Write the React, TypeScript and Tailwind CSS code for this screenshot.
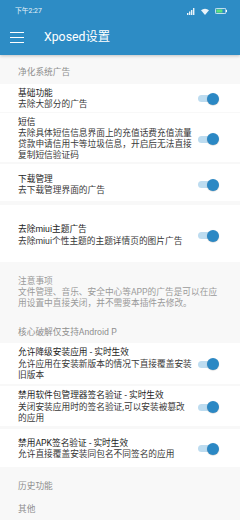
import React from "react";

const FONT = { fontFamily: '"Roboto","Noto Sans CJK SC",sans-serif' };

function Toggle() {
  return (
    <div className="relative w-[21px] h-[12px] shrink-0">
      <div className="absolute left-0 top-[2.5px] w-[17px] h-[7px] rounded-full bg-[#bddcf0]" />
      <div className="absolute right-0 top-0 w-[12px] h-[12px] rounded-full bg-[#2b88c4] shadow-[0_0.5px_1px_rgba(0,0,0,0.25)]" />
    </div>
  );
}

type RowProps = {
  title: string;
  lines: string[];
  cls: string;
};

function Row({ title, lines, cls }: RowProps) {
  return (
    <div className={`flex items-center justify-between bg-white pl-[18px] pr-[21px] ${cls}`}>
      <div className="w-[177px] text-[8.7px] leading-[11.2px] whitespace-nowrap">
        <div className="text-[#1c1c1c]">{title}</div>
        {lines.map((l, i) => (
          <div key={i} className="text-[#383838]">
            {l}
          </div>
        ))}
      </div>
      <Toggle />
    </div>
  );
}

function Category({ text, cls }: { text: string; cls: string }) {
  return (
    <div className={`pl-[18px] text-[8.7px] leading-[11.2px] text-[#8e8e8e] ${cls}`}>{text}</div>
  );
}

export default function App() {
  return (
    <div className="w-[240px] h-[520px] overflow-hidden bg-[#f8f8f8] flex flex-col" style={FONT}>
      <div className="relative z-10 bg-[#2d8cc5] shadow-[0_1px_3px_rgba(0,0,0,0.22)]">
        <div className="h-[20px] flex items-center justify-between pl-[15px] pr-[13px] pt-[2px]">
          <span className="text-[6.8px] leading-none text-white/90">下午2:27</span>
          <div className="flex items-center gap-[6px]">
            <svg width="8" height="7" viewBox="0 0 8 7">
              <rect x="0" y="5" width="1.4" height="2" fill="#fff" fillOpacity="0.9" />
              <rect x="2" y="3.5" width="1.4" height="3.5" fill="#fff" fillOpacity="0.9" />
              <rect x="4" y="2" width="1.4" height="5" fill="#fff" fillOpacity="0.9" />
              <rect x="6" y="0" width="1.4" height="7" fill="#fff" fillOpacity="0.9" />
            </svg>
            <svg width="8" height="7" viewBox="0 0 8 7">
              <path d="M4 7 L0 2.2 A6 6 0 0 1 8 2.2 Z" fill="#fff" fillOpacity="0.9" />
            </svg>
            <svg width="12" height="6" viewBox="0 0 12 6">
              <rect x="0.4" y="0.4" width="10.4" height="5.2" rx="1" fill="none" stroke="#fff" strokeWidth="0.8" />
              <rect x="1.4" y="1.4" width="6" height="3.2" fill="#5ee07a" />
              <rect x="11" y="2" width="1" height="2" fill="#fff" />
            </svg>
          </div>
        </div>
        <div className="h-[35px] flex items-center">
          <div className="ml-[10px] w-[14px] flex flex-col gap-[3.5px]">
            <div className="h-[1.5px] bg-white" />
            <div className="h-[1.5px] bg-white" />
            <div className="h-[1.5px] bg-white" />
          </div>
          <span className="ml-[20px] text-[12.3px] leading-none text-white">Xposed设置</span>
        </div>
      </div>

      <Category text="净化系统广告" cls="pt-[12px] pb-[6px]" />
      <Row title="基础功能" lines={["去除大部分的广告"]} cls="pt-[3.5px] pb-[1.5px]" />
      <div className="h-[1.5px]" />
      <Row
        title="短信"
        lines={[
          "去除具体短信信息界面上的充值话费充值流量",
          "贷款申请信用卡等垃圾信息，开启后无法直接",
          "复制短信验证码",
        ]}
        cls="pt-[3.5px] pb-[0.5px]"
      />
      <div className="h-[2.5px]" />
      <Row title="下载管理" lines={["去下载管理界面的广告"]} cls="pt-[9.3px] pb-[5px]" />
      <div className="h-[3.5px]" />
      <Row title="去除miui主题广告" lines={["去除miui个性主题的主题详情页的图片广告"]} cls="pt-[19.8px] pb-[15px]" />

      <div className="pl-[18px] pt-[14px] text-[8.7px] leading-[11.3px] text-[#9a9a9a] whitespace-nowrap">
        <div>注意事项</div>
        <div>文件管理、音乐、安全中心等APP的广告是可以在应</div>
        <div>用设置中直接关闭，并不需要本插件去修改。</div>
      </div>
      <Category text="核心破解仅支持Android P" cls="pt-[17px] pb-[5px]" />
      <Row
        title="允许降级安装应用 - 实时生效"
        lines={["允许应用在安装新版本的情况下直接覆盖安装", "旧版本"]}
        cls="pt-[4.4px] pb-[3px]"
      />
      <div className="h-[2px]" />
      <Row
        title="禁用软件包管理器签名验证 - 实时生效"
        lines={["关闭安装应用时的签名验证,可以安装被篡改", "的应用"]}
        cls="pt-[4.4px] pb-[2px]"
      />
      <div className="h-[3px]" />
      <Row
        title="禁用APK签名验证 - 实时生效"
        lines={["允许直接覆盖安装同包名不同签名的应用"]}
        cls="pt-[8.7px] pb-[7px]"
      />
      <Category text="历史功能" cls="pt-[14px]" />
      <Category text="其他" cls="pt-[11.4px]" />
    </div>
  );
}
